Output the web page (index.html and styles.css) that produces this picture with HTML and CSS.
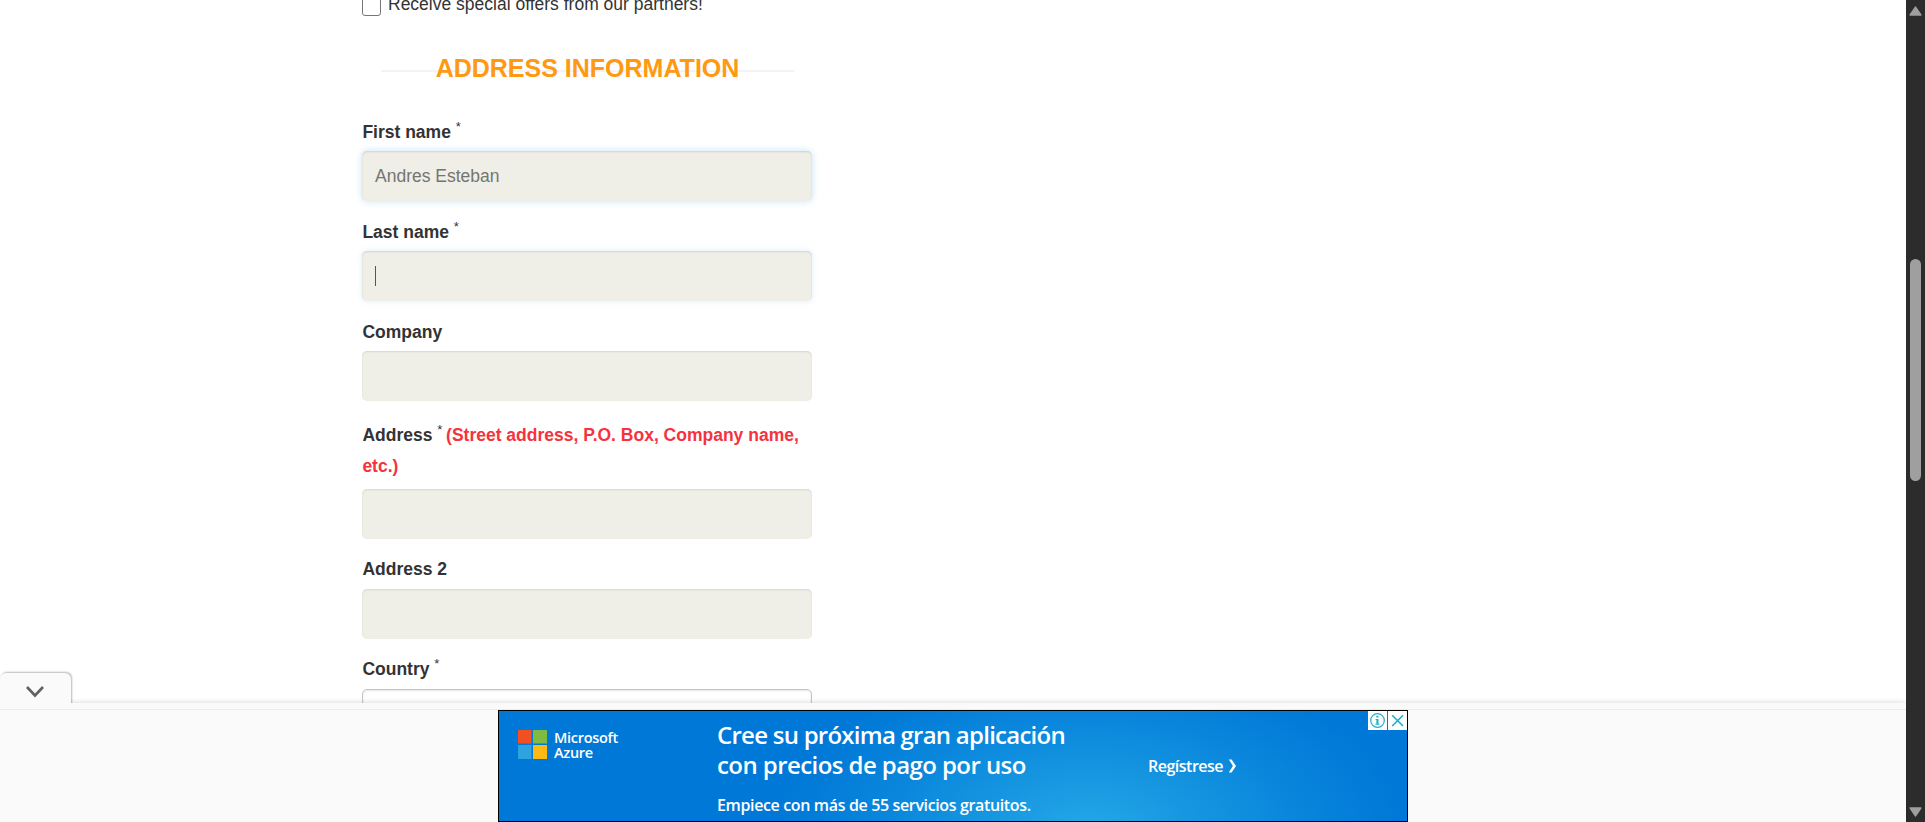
FILE: index.html
```html
<!DOCTYPE html>
<html lang="en">
<head>
<meta charset="utf-8">
<title>Address information</title>
<link rel="stylesheet" href="styles.css">
</head>
<body>
<div class="window">
  <div class="page">
    <main class="content">
      <form class="form">
        <label class="offers"><span class="checkbox"></span><span class="offers-text">Receive special offers from our partners!</span></label>
        <h2 class="heading"><span class="heading-text">ADDRESS INFORMATION</span></h2>
        <div class="field"><div class="label">First name <sup>*</sup></div><div class="input glow">Andres Esteban</div></div>
        <div class="field"><div class="label">Last name <sup>*</sup></div><div class="input glow soft"><span class="caret"></span></div></div>
        <div class="field"><div class="label">Company</div><div class="input"></div></div>
        <div class="field tall"><div class="label">Address <sup>*</sup> <span class="hint">(Street address, P.O. Box, Company name, etc.)</span></div><div class="input"></div></div>
        <div class="field low"><div class="label">Address 2</div><div class="input"></div></div>
        <div class="field low"><div class="label">Country <sup>*</sup></div><div class="input select"></div></div>
      </form>
    </main>
    <footer class="anchor">
      <div class="tab">
        <svg width="20" height="14" viewBox="0 0 20 14"><path d="M2 2l8 8.5L18 2" fill="none" stroke="#616161" stroke-width="2.6"/></svg>
      </div>
      <div class="strip"></div>
      <div class="ad">
        <div class="brand">
          <svg width="29" height="29" viewBox="0 0 29 29"><path fill="#f25022" d="M0 0h13.5v13.5H0z"/><path fill="#7fba42" d="M15 0h14v13.5H15z"/><path fill="#2fa3e0" d="M0 15h13.5v14H0z"/><path fill="#ffb914" d="M15 15h14v14H15z"/></svg>
          <div class="brand-name"><div class="ms">Microsoft</div><div class="az">Azure</div></div>
        </div>
        <div class="copy">
          <div class="big one">Cree su próxima gran aplicación</div>
          <div class="big two">con precios de pago por uso</div>
          <div class="small">Empiece con más de 55 servicios gratuitos.</div>
        </div>
        <div class="cta"><span>Regístrese</span><svg width="9" height="14" viewBox="0 0 9 14"><path d="M.8.4h2.8L8 7l-4.4 6.6H.8L4.9 7z" fill="#fff"/></svg></div>
        <div class="choices">
          <svg width="19" height="19" viewBox="0 0 19 19"><path fill="#fff" d="M0 0h19v19H0z"/><circle cx="9.5" cy="9.5" r="6.8" fill="none" stroke="#20aecb" stroke-width="1.2"/><path d="M8.3 4.8h2.2v1.8H8.3zM7.6 8h2.9v4.7h1v1.1H7.4v-1.1h1V9H7.6z" fill="#20aecb"/></svg>
          <svg width="19" height="19" viewBox="0 0 19 19"><path fill="#fff" d="M0 0h19v19H0z"/><path d="M4.2 4.2l10.8 10.8M15 4.2L4.2 15" stroke="#20aecb" stroke-width="1.6"/></svg>
        </div>
      </div>
    </footer>
  </div>
  <div class="scrollbar">
    <svg width="13" height="10" viewBox="0 0 13 10"><path d="M6.5 1.2L11.8 9H1.2z" fill="#9f9f9f" stroke="#9f9f9f" stroke-width="1.6" stroke-linejoin="round"/></svg>
    <div class="thumb"></div>
    <svg class="down" width="13" height="10" viewBox="0 0 13 10"><path d="M6.5 8.8L1.2 1h10.6z" fill="#9f9f9f" stroke="#9f9f9f" stroke-width="1.6" stroke-linejoin="round"/></svg>
  </div>
</div>
</body>
</html>
```
FILE: styles.css
```css
* { box-sizing: border-box; }
body { margin: 0; overflow: hidden; font-family: "Liberation Sans", Arial, sans-serif; font-size: 17.5px; color: #333; background: #fff; }
svg { display: block; }
.window { display: flex; width: 1925px; height: 822px; }
.page { width: 1906px; display: flex; flex-direction: column; }
.content { height: 703px; overflow: hidden; padding-left: 362px; }
.form { width: 450px; }

.offers { display: flex; height: 16px; gap: 7px; }
.checkbox { width: 19px; height: 19px; margin-top: -3px; border: 1px solid #767676; border-radius: 3px; background: #fff; }
.offers-text { line-height: 20px; margin-top: -6px; white-space: nowrap; }

.heading { display: flex; justify-content: center; width: 413px; height: 55px; margin: 16px 0 30px 19px; font-size: 25px; line-height: 73px; color: #ff9912; background: linear-gradient(#f3f3f3, #f3f3f3) 0 38px / 100% 2px no-repeat; }
.heading-text { white-space: nowrap; }

.field { display: flex; flex-direction: column; height: 100px; }
.label { height: 50px; padding: 16px 0 0 .4px; line-height: 31px; font-weight: bold; }
.label sup { font-size: 13.1px; font-weight: normal; line-height: 0; vertical-align: 7px; }
.hint { color: #f5333f; margin-left: -1.2px; }
.field.tall { height: 138px; }
.field.tall .label { height: 88px; padding-top: 19px; }
.field.low .label { padding-top: 15px; }
.field:first-of-type { margin-top: -16px; }
.input { height: 50px; padding: 0 13px; line-height: 50px; color: #757570; background: #efefe8; border-radius: 5px; box-shadow: inset 0 1px 2px rgba(0, 0, 0, .1); }
.input.glow { box-shadow: inset 0 1px 2px rgba(0, 0, 0, .12), 0 0 7px rgba(102, 175, 233, .38); }
.input.glow.soft { box-shadow: inset 0 1px 2px rgba(0, 0, 0, .12), 0 0 6px rgba(102, 175, 233, .22); }
.input.select { background: #fff; border: 1px solid #c4c4c4; }
.caret { display: block; width: 1px; height: 20px; margin-top: 15px; background: #555; }

.anchor { position: relative; height: 119px; background: #fafafa; box-shadow: 0 -1px 5px rgba(0, 0, 0, .13); }
.tab { position: absolute; left: 0; top: -30px; width: 71px; height: 36px; padding: 12px 0 0 25px; background: #fafafa; border-radius: 6px 6px 0 0; box-shadow: 1px -1px 2px rgba(0, 0, 0, .28); clip-path: inset(-6px -6px 6px 0); }
.strip { height: 7px; border-bottom: 1px solid #ececec; }
.ad { position: relative; display: flex; width: 910px; height: 112px; margin-left: 498px; border: 1px solid #000; color: #fff; font-family: "Open Sans", "Noto Sans", sans-serif; background: radial-gradient(ellipse 310px 170px at 590px 120px, #25a9e8 0%, #1898e1 30%, #0a87dc 65%, #0078d7 100%); }
.brand { display: flex; gap: 7px; width: 218px; padding: 19px 0 0 19px; }
.brand-name { font-size: 14.5px; font-weight: 600; line-height: 15px; letter-spacing: -.3px; white-space: nowrap; }
.copy { width: 400px; padding-top: 9px; font-weight: 600; white-space: nowrap; }
.big { font-size: 24px; line-height: 30px; letter-spacing: -.75px; }
.two { letter-spacing: -.57px; }
.small { margin-top: 14px; font-size: 16px; line-height: 22px; letter-spacing: -.36px; }
.cta { display: flex; gap: 5px; align-items: center; height: 24px; margin: 43px 0 0 31px; font-size: 16px; font-weight: 600; letter-spacing: -.5px; }
.choices { position: absolute; top: 0; right: 0; display: flex; gap: 1px; }

.scrollbar { display: flex; flex-direction: column; align-items: center; width: 19px; padding: 6px 0 5px; background: #2c2c2c; }
.thumb { width: 11px; height: 222px; margin-top: 243px; border-radius: 6px; background: #9f9f9f; }
.down { margin-top: auto; }
```
